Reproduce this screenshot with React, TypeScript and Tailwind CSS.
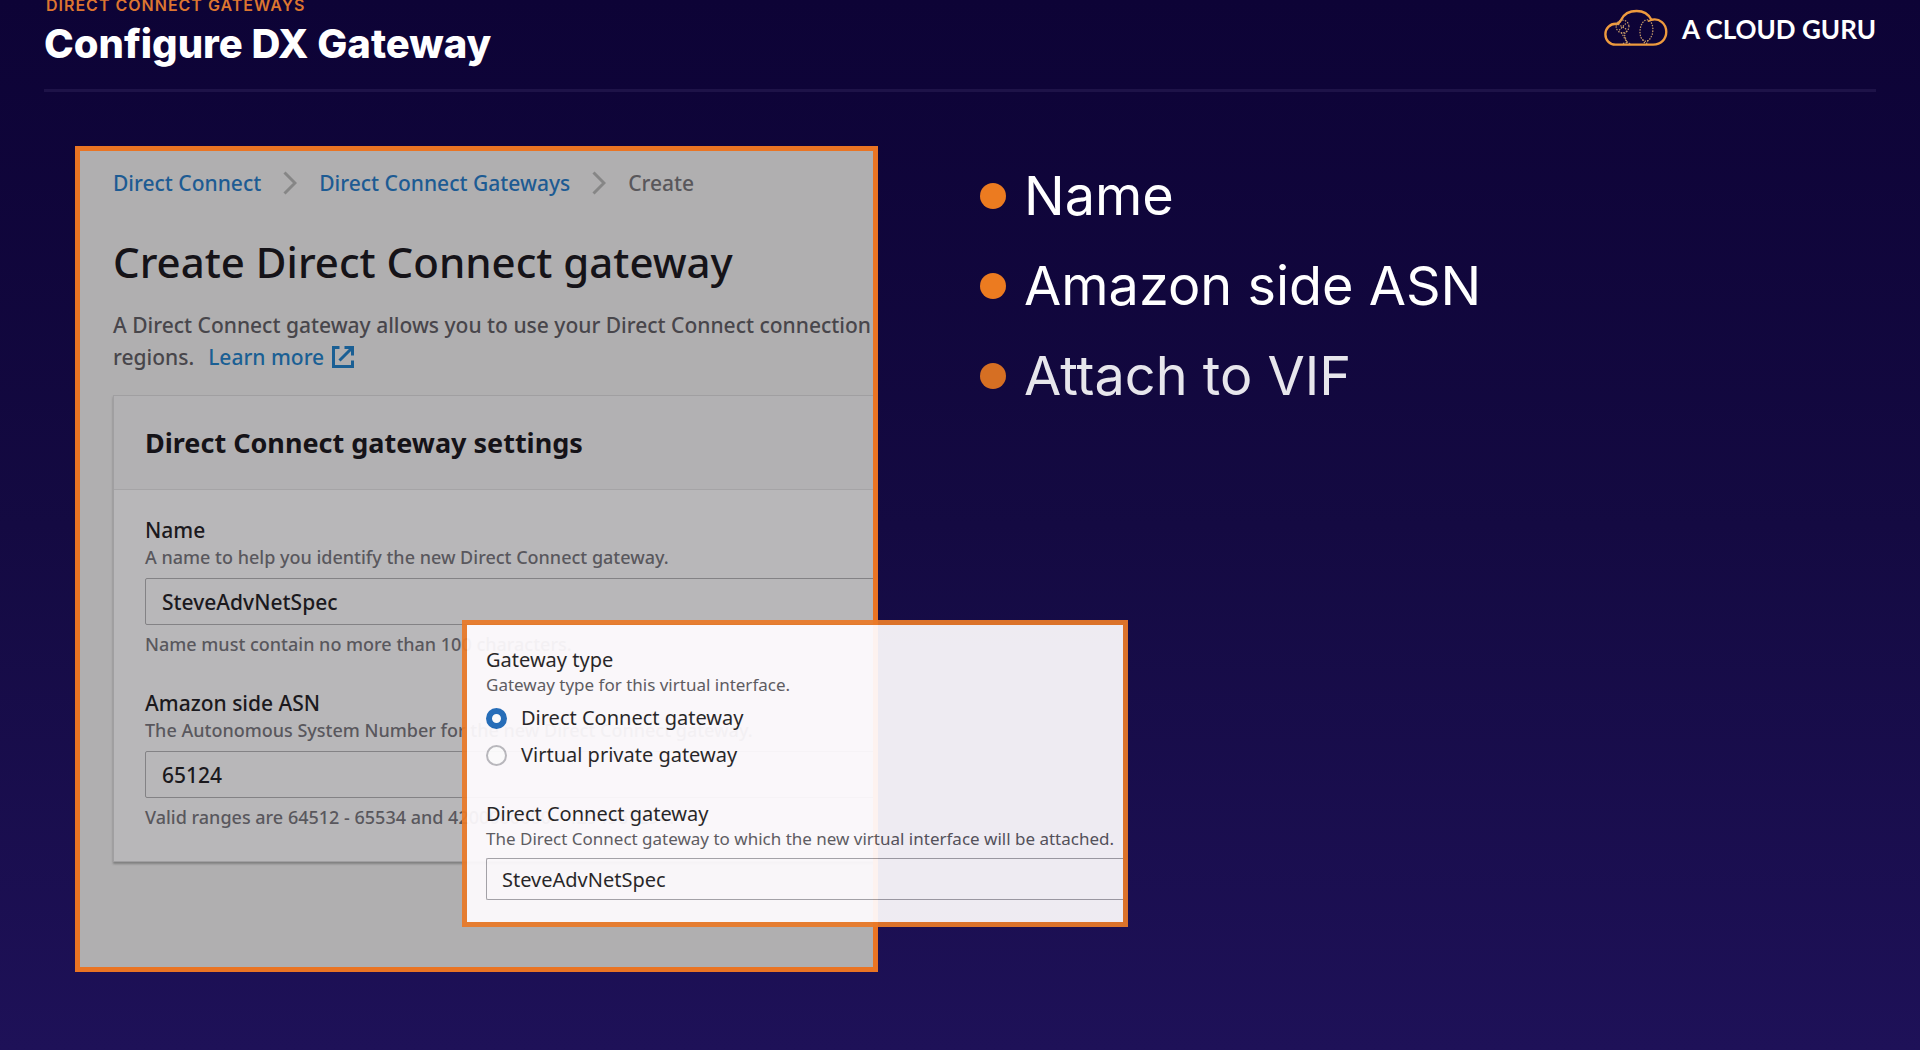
import type { ReactNode } from "react";

function CloudLogo() {
  return (
    <svg viewBox="28 24 190 110" className="h-[37px] w-16" fill="none" aria-hidden="true">
      <path
        d="M62 130C44 130 32 116 32 99C32 82 45 68 63 68C71 67 75 63 79 56C87 39 104 30 125 30C145 30 160 39 169 56C193 50 213 68 213 92C213 113 198 130 174 130Z"
        stroke="#ee9a3e"
        strokeWidth="7"
        strokeLinejoin="round"
      />
      <path d="M79 56C76 64 71 69 64 71M169 56C166 57 163 58 160 60" stroke="#ee9a3e" strokeWidth="5" strokeLinecap="round" />
      <g stroke="#c59a68" strokeWidth="4" strokeLinecap="round" strokeDasharray="1 7">
        <circle cx="83" cy="76" r="19" />
        <path d="M71 70L94 84M74 86L92 68M80 95L94 120L106 128M96 90L88 98L96 124L82 127" />
        <ellipse cx="154" cy="88" rx="19" ry="32" transform="rotate(6 154 88)" />
        <path d="M144 116L150 128M158 118L154 128" />
      </g>
    </svg>
  );
}

function Chevron() {
  return (
    <svg viewBox="0 0 14 24" className="h-6 w-3.5 shrink-0" fill="none" stroke="#868686" strokeWidth="3" aria-hidden="true">
      <path d="M1.5 1.5L12 12L1.5 22.5" />
    </svg>
  );
}

function ExternalIcon() {
  return (
    <svg viewBox="0 0 22 22" className="h-[22px] w-[22px]" fill="none" stroke="currentColor" strokeWidth="3" aria-hidden="true">
      <path d="M7.5 1.5H1.5V20.5H20.5V14.5M12.5 1.5H20.5V9.5M20 2L7.5 14.5" />
    </svg>
  );
}

function Field({ id, label, hint, value, note }: { id: string; label: string; hint: string; value: string; note: string }) {
  return (
    <div className="whitespace-nowrap">
      <label htmlFor={id} className="block text-[21px] leading-7 font-medium text-[#1b191d]">
        {label}
      </label>
      <p className="text-lg leading-[26px] font-medium text-[#59575d]">{hint}</p>
      <input
        id={id}
        type="text"
        defaultValue={value}
        className="mt-2 block h-[47px] w-full rounded-xs border border-[#838285] bg-transparent px-4 text-[21px] font-medium text-[#1b191d]"
      />
      <p className="mt-1.5 text-lg leading-[26px] font-medium text-[#59575d]">{note}</p>
    </div>
  );
}

function RadioRow({ label, checked }: { label: string; checked?: boolean }) {
  return (
    <label className="flex items-center gap-3.5 text-xl leading-7 text-[#1d1b20]">
      <input
        type="radio"
        name="gateway-type"
        defaultChecked={checked}
        className="size-[21px] appearance-none rounded-full border-2 border-[#b9b7bd] bg-white checked:border-[6px] checked:border-[#1c68b8]"
      />
      {label}
    </label>
  );
}

function Bullet({ children, className = "" }: { children: ReactNode; className?: string }) {
  return (
    <li className={`flex items-center gap-[18px] ${className}`}>
      <span className="size-[26px] shrink-0 rounded-full bg-[#ec7b20]" />
      {children}
    </li>
  );
}

export default function App() {
  return (
    <div className="min-h-screen overflow-hidden bg-linear-to-b from-[#0d0336] via-[#140a42] to-[#1e1158] font-['Inter',sans-serif] text-white">
      <header className="mx-11 flex items-start justify-between border-b-3 border-[#1e1348] pb-[21px]">
        <div>
          <p className="-mt-[5px] pl-0.5 text-base leading-5 font-semibold tracking-[1px] text-[#dc7530]">DIRECT CONNECT GATEWAYS</p>
          <h1 className="mt-[5px] text-[40px] leading-12 font-extrabold">Configure DX Gateway</h1>
        </div>
        <div className="mt-[9px] flex items-start gap-3.5 font-['Lato',sans-serif] text-[26px] leading-10 font-bold">
          <CloudLogo />
          <span>A CLOUD GURU</span>
        </div>
      </header>

      <main className="grid grid-cols-[803fr_865fr] items-start gap-[102px] px-[75px] pt-[54px] pb-12">
        <div className="relative font-['Noto_Sans',sans-serif]">
          <section className="overflow-hidden border-5 border-[#ea7423] bg-[#b0afb0] pt-[18px] pb-[105px] pl-[33px]">
            <nav aria-label="Breadcrumb" className="flex items-center text-[21px] leading-7 font-medium whitespace-nowrap text-[#1d5b93]">
              <a href="#direct-connect">Direct Connect</a>
              <span className="px-[22px]"><Chevron /></span>
              <a href="#gateways">Direct Connect Gateways</a>
              <span className="px-[22px]"><Chevron /></span>
              <span className="text-[#59575b]">Create</span>
            </nav>

            <h2 className="mt-[37px] text-[42px] leading-14 font-medium whitespace-nowrap text-[#151318]">Create Direct Connect gateway</h2>

            <p className="mt-[19px] text-[21px] leading-8 font-medium whitespace-nowrap text-[#48464b]">
              A Direct Connect gateway allows you to use your Direct Connect connection
              <br />
              regions.
              <a href="#learn-more" className="ml-3.5 inline-flex items-center gap-2 text-[#1a5f94]">
                Learn more <ExternalIcon />
              </a>
            </p>

            <div className="mt-[22px] -mr-10 border border-[#a09fa1] bg-[#b8b7b9] shadow-[0_2px_2px_#808080]">
              <h3 className="border-b border-[#a5a4a6] bg-[#b2b1b3] px-[31px] pt-[29px] pb-7 text-[27px] leading-9 font-bold whitespace-nowrap text-[#151318]">
                Direct Connect gateway settings
              </h3>
              <div className="flex flex-col gap-8 pt-[26px] pb-[31px] pl-[31px]">
                <Field
                  id="gateway-name"
                  label="Name"
                  hint="A name to help you identify the new Direct Connect gateway."
                  value="SteveAdvNetSpec"
                  note="Name must contain no more than 100 characters."
                />
                <Field
                  id="amazon-asn"
                  label="Amazon side ASN"
                  hint="The Autonomous System Number for the new Direct Connect gateway."
                  value="65124"
                  note="Valid ranges are 64512 - 65534 and 4200000000 - 4294967294."
                />
              </div>
            </div>
          </section>

          <section className="absolute top-[474px] left-[387px] w-[666px] overflow-hidden border-5 border-[#ea7a28] bg-[#fffcff] pt-[22px] pb-[22px] pl-[19px] whitespace-nowrap opacity-93">
            <fieldset>
              <legend className="text-xl leading-[26px] text-[#1d1b20]">Gateway type</legend>
              <p className="text-[17px] leading-6 text-[#58565b]">Gateway type for this virtual interface.</p>
              <div className="mt-[7px] flex flex-col gap-[9px]">
                <RadioRow label="Direct Connect gateway" checked />
                <RadioRow label="Virtual private gateway" />
              </div>
            </fieldset>
            <label htmlFor="attached-gateway" className="mt-8 block text-xl leading-[26px] text-[#1d1b20]">
              Direct Connect gateway
            </label>
            <p className="text-[17px] leading-6 text-[#58565b]">The Direct Connect gateway to which the new virtual interface will be attached.</p>
            <input
              id="attached-gateway"
              type="text"
              defaultValue="SteveAdvNetSpec"
              className="mt-[7px] block h-[42px] w-full rounded-l-xs border border-r-0 border-[#a3a1a7] bg-transparent px-[15px] text-xl text-[#1d1b20]"
            />
          </section>
        </div>

        <ul className="pt-[5px] text-[54px] leading-[90px] font-normal whitespace-nowrap">
          <Bullet>Name</Bullet>
          <Bullet>Amazon side ASN</Bullet>
          <Bullet className="opacity-90">Attach to VIF</Bullet>
        </ul>
      </main>
    </div>
  );
}
